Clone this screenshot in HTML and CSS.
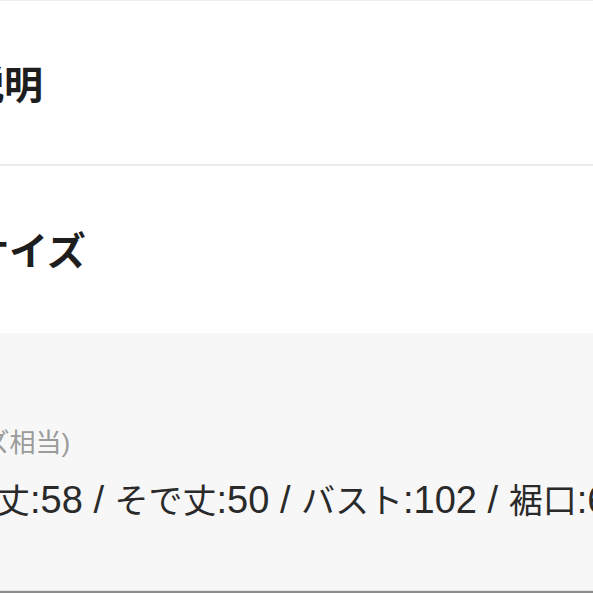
FILE: index.html
```html
<!DOCTYPE html>
<html lang="ja">
<head>
<meta charset="utf-8">
<link rel="stylesheet" href="styles.css">
</head>
<body>
<div class="page">
  <section class="block block-first">
    <h2 class="heading heading-desc">説明</h2>
  </section>
  <section class="block block-second">
    <h2 class="heading heading-size">サイズ</h2>
  </section>
  <section class="detail">
    <p class="note">(Mサイズ相当)</p>
    <p class="spec">着丈<span class="lat">:58 / </span>そで丈<span class="lat">:50 / </span>バスト<span class="lat">:102 / </span>裾口<span class="lat">:62</span></p>
  </section>
</div>
</body>
</html>
```
FILE: styles.css
```css
html, body {
  margin: 0;
  padding: 0;
  background: #ffffff;
  overflow: hidden;
}
body {
  width: 593px;
  height: 593px;
  font-family: "Liberation Sans", "Noto Sans CJK JP", sans-serif;
}
.page {
  display: flex;
  flex-direction: column;
  height: 593px;
  border-top: 1px solid #ececec;
  box-sizing: border-box;
}
.block {
  background: #ffffff;
}
.block-first {
  height: 165px;
  padding-top: 61px;
  box-sizing: border-box;
  border-bottom: 2px solid #ebebeb;
}
.block-second {
  height: 167px;
  padding-top: 62px;
  box-sizing: border-box;
}
.heading {
  margin: 0;
  font-size: 39px;
  line-height: 48px;
  font-weight: 700;
  color: #1e1e1e;
  white-space: nowrap;
}
.heading-desc {
  margin-left: -35px;
}
.heading-size {
  margin-left: -30px;
}
.detail {
  flex: 1;
  background: #f7f7f7;
  padding-top: 92px;
  border-bottom: 2px solid #8c8c8c;
  box-shadow: inset 0 -1px 0 #e4e4e4;
}
.note {
  margin: 0 0 0 -98px;
  font-size: 26px;
  line-height: 36px;
  color: #9a9a9a;
  white-space: nowrap;
}
.spec {
  margin: 18px 0 0 -38px;
  font-size: 34px;
  line-height: 44px;
  color: #2a2a2a;
  white-space: nowrap;
}
.lat {
  font-size: 38px;
  line-height: 1;
}
```
